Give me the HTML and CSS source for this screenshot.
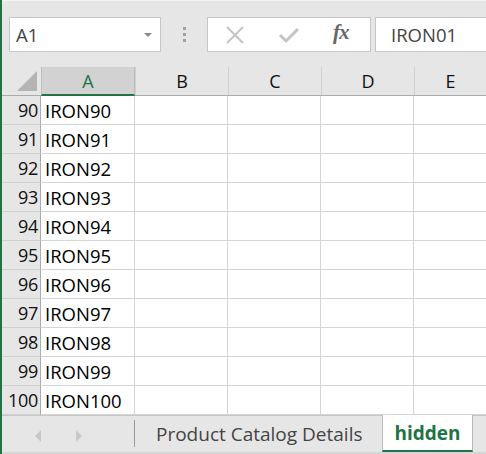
FILE: index.html
```html
<!DOCTYPE html>
<html>
<head>
<meta charset="utf-8">
<link rel="stylesheet" href="styles.css">
</head>
<body>
<div class="app">
  <div class="toolbar">
    <div class="namebox"><span class="nb-text">A1</span><span class="nb-arrow"></span></div>
    <div class="grip"><i></i><i></i><i></i></div>
    <div class="fbuttons">
      <svg class="ico-x" width="20" height="20" viewBox="0 0 20 20"><path d="M2 2 L18 18 M18 2 L2 18" stroke="#c4c4c4" stroke-width="2" fill="none"/></svg>
      <svg class="ico-check" width="22" height="18" viewBox="0 0 22 18"><path d="M2 9 L8 15 L20 3" stroke="#c4c4c4" stroke-width="3" fill="none"/></svg>
      <span class="fx">fx</span>
    </div>
    <div class="formula">IRON01</div>
  </div>
  <div class="sheet">
    <div class="corner"><span class="tri"></span></div>
    <div class="colhead sel">A</div>
    <div class="colhead">B</div>
    <div class="colhead">C</div>
    <div class="colhead">D</div>
    <div class="colhead last">E</div>
  </div>
  <div class="rows">
    <div class="row"><div class="rh">90</div><div class="c">IRON90</div><div class="c"></div><div class="c"></div><div class="c"></div><div class="c last"></div></div>
    <div class="row"><div class="rh">91</div><div class="c">IRON91</div><div class="c"></div><div class="c"></div><div class="c"></div><div class="c last"></div></div>
    <div class="row"><div class="rh">92</div><div class="c">IRON92</div><div class="c"></div><div class="c"></div><div class="c"></div><div class="c last"></div></div>
    <div class="row"><div class="rh">93</div><div class="c">IRON93</div><div class="c"></div><div class="c"></div><div class="c"></div><div class="c last"></div></div>
    <div class="row"><div class="rh">94</div><div class="c">IRON94</div><div class="c"></div><div class="c"></div><div class="c"></div><div class="c last"></div></div>
    <div class="row"><div class="rh">95</div><div class="c">IRON95</div><div class="c"></div><div class="c"></div><div class="c"></div><div class="c last"></div></div>
    <div class="row"><div class="rh">96</div><div class="c">IRON96</div><div class="c"></div><div class="c"></div><div class="c"></div><div class="c last"></div></div>
    <div class="row"><div class="rh">97</div><div class="c">IRON97</div><div class="c"></div><div class="c"></div><div class="c"></div><div class="c last"></div></div>
    <div class="row"><div class="rh">98</div><div class="c">IRON98</div><div class="c"></div><div class="c"></div><div class="c"></div><div class="c last"></div></div>
    <div class="row"><div class="rh">99</div><div class="c">IRON99</div><div class="c"></div><div class="c"></div><div class="c"></div><div class="c last"></div></div>
    <div class="row"><div class="rh">100</div><div class="c">IRON100</div><div class="c"></div><div class="c"></div><div class="c"></div><div class="c last"></div></div>
  </div>
  <div class="tabs">
    <div class="nav"><span class="arr left"></span><span class="arr right"></span></div>
    <div class="tab">Product Catalog Details</div>
    <div class="tab active">hidden</div>
    <div class="tabfill"></div>
  </div>
</div>
</body>
</html>
```
FILE: styles.css
```css
html, body { margin: 0; padding: 0; }
body { width: 486px; height: 454px; overflow: hidden; background: #e6e6e6; font-family: "Open Sans", "Liberation Sans", sans-serif; }
.app { width: 484px; height: 454px; border-left: 2px solid #217346; display: flex; flex-direction: column; }
.toolbar { height: 67px; display: flex; align-items: flex-start; padding-top: 17px; box-sizing: border-box; border-top: 1px solid #f3f3f3; }
.namebox { width: 150px; height: 33px; margin-left: 7px; background: #fff; border: 1px solid #c6c6c6; display: flex; align-items: center; justify-content: space-between; box-sizing: content-box; margin-top: -1px; }
.nb-text { font-size: 18.5px; color: #444; padding-left: 6px; }
.nb-arrow { width: 0; height: 0; border-left: 4px solid transparent; border-right: 4px solid transparent; border-top: 4px solid #8a8a8a; margin-right: 8px; }
.grip { width: 46px; height: 35px; display: flex; flex-direction: column; align-items: center; justify-content: center; gap: 3px; margin-top: -1px; }
.grip i { display: block; width: 3px; height: 3px; background: #a0a0a0; }
.fbuttons { width: 162px; height: 33px; background: #fff; border: 1px solid #c6c6c6; display: flex; align-items: center; margin-top: -1px; position: relative; }
.ico-x { position: absolute; left: 17px; top: 7px; }
.ico-check { position: absolute; left: 70px; top: 8px; }
.fx { position: absolute; left: 125px; top: 2px; font-family: "Liberation Serif", serif; font-style: italic; font-weight: bold; font-size: 21px; color: #666; letter-spacing: -1px; }
.formula { flex: 1; height: 33px; margin-left: 4px; background: #fff; border: 1px solid #c6c6c6; border-right: none; margin-top: -1px; font-size: 18.5px; color: #444; line-height: 33px; padding-left: 15px; }
.sheet { display: grid; grid-template-columns: 39px 94px 93px 93px 93px 1fr; height: 29px; background: #e6e6e6; border-bottom: 1px solid #ababab; box-sizing: border-box; }
.corner { position: relative; }
.tri { position: absolute; right: 4px; bottom: 4px; width: 0; height: 0; border-left: 20px solid transparent; border-bottom: 20px solid #b4b4b4; }
.colhead { font-size: 18px; color: #111; display: flex; align-items: center; justify-content: center; border-left: 1px solid #d0d0d0; }
.colhead.sel { background: #d2d2d2; color: #217346; border-bottom: 2px solid #217346; margin-bottom: -1px; border-left: 1px solid #bdbdbd; border-right: 1px solid #bdbdbd; }
.rows { background: #fff; }
.row { display: grid; grid-template-columns: 39px 94px 93px 93px 93px 1fr; height: 29px; }
.rh { background: #e6e6e6; font-size: 18px; color: #111; display: flex; align-items: center; justify-content: flex-end; padding-right: 2px; border-bottom: 1px solid #d0d0d0; border-right: 1px solid #ababab; box-sizing: border-box; letter-spacing: -0.3px; }
.c { border-right: 1px solid #d4d4d4; border-bottom: 1px solid #d4d4d4; font-size: 18.5px; color: #000; display: flex; align-items: center; padding-left: 4px; box-sizing: border-box; }
.c.last { border-right: none; }
.tabs { flex: 1; display: flex; border-top: 1px solid #c6c6c6; border-bottom: 2px solid #d6d6d6; background: #e6e6e6; }
.nav { width: 133px; display: flex; align-items: center; position: relative; }
.nav::after { content: ""; position: absolute; right: 0; top: 4px; bottom: 5px; width: 1px; background: #9a9a9a; }
.arr { position: absolute; top: 14px; width: 0; height: 0; border-top: 6px solid transparent; border-bottom: 6px solid transparent; }
.arr.left { left: 33px; border-right: 6px solid #c8c8c8; }
.arr.right { left: 74px; border-left: 6px solid #c8c8c8; }
.tab { padding: 0 20px 0 21px; font-size: 19px; color: #444; display: flex; align-items: center; border-right: 1px solid #b8b8b8; }
.tab.active { background: #fff; color: #217346; font-weight: bold; padding: 0 11px; border-left: 1px solid #b8b8b8; border-bottom: 2px solid #217346; margin-top: -1px; margin-left: -1px; }
.tabfill { flex: 1; }
```
